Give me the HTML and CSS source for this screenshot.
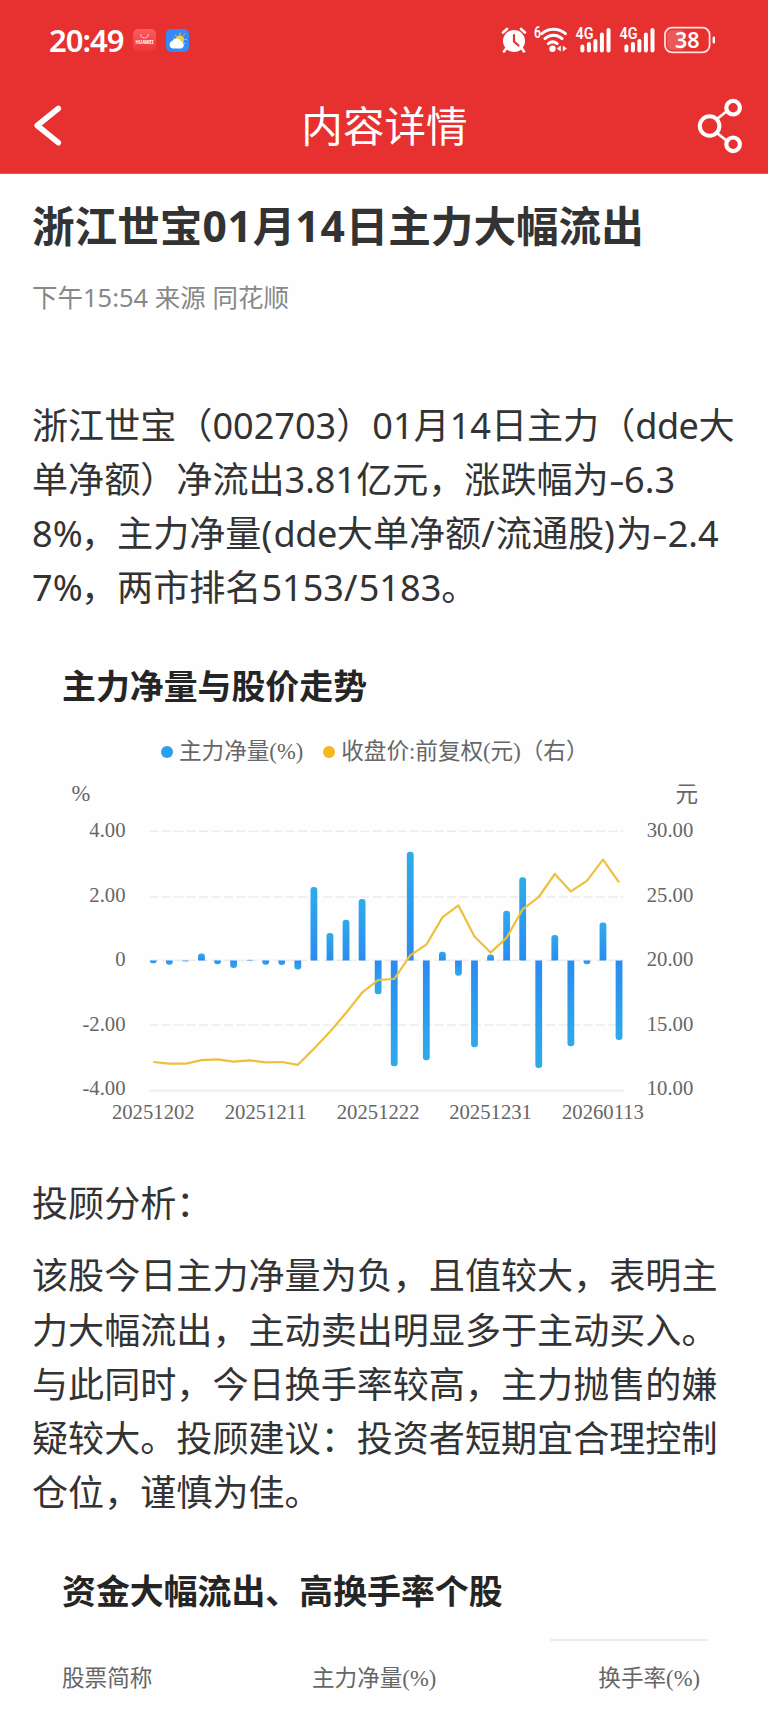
FILE: index.html
```html
<!DOCTYPE html>
<html lang="zh-CN">
<head>
    <meta charset="UTF-8">
    <meta name="viewport" content="width=device-width, initial-scale=1.0">
    <title>内容详情</title>
    <link rel="stylesheet" href="styles.css">
</head>
<body>
    <header class="header">
        <div class="status-bar">
            <span class="time">20:49</span>
            <svg class="app-icon" width="23" height="23" viewBox="0 0 23 23">
                <defs>
                    <linearGradient id="store" x1="0" y1="0" x2="0" y2="1">
                        <stop offset="0" stop-color="#ff5a60"/>
                        <stop offset="1" stop-color="#ea3638"/>
                    </linearGradient>
                </defs>
                <rect width="23" height="23" rx="5" fill="url(#store)"/>
                <path d="M7.5 5a4 4 0 0 0 8 0" fill="none" stroke="#ffc9a8" stroke-width="1"/>
                <text x="11.5" y="15.2" class="store-text" textLength="18" lengthAdjust="spacingAndGlyphs">HUAWEI</text>
            </svg>
            <svg class="app-icon" width="23" height="23" viewBox="0 0 23 23">
                <rect width="23" height="23" rx="5" fill="#338af8"/>
                <g stroke="#f5cf58" stroke-width="1" stroke-linecap="round">
                    <path d="M14 4v1.5M9.3 6.2l1.2 1M18.7 5l-1 1.2M20.3 10.5h-1.3M18.6 14.6l-1-.8M7.8 9.2h1"/>
                </g>
                <circle cx="14" cy="10.5" r="4" fill="#f9cb45"/>
                <path d="M6.8 19.5a4 4 0 0 1-.2-7.8a4.8 4.8 0 0 1 8.6 1.1a3.5 3.5 0 0 1 .3 6.7z" fill="#fff"/>
            </svg>
            <div class="status-right">
                <svg width="26" height="26" viewBox="0 0 26 26">
                    <circle cx="13" cy="14" r="11" fill="#fff"/>
                    <path d="M2 5.5l4-3.5M24 5.5l-4-3.5M5.5 21l-2.5 3.5M20.5 21l2.5 3.5" stroke="#fff" stroke-width="2.6" stroke-linecap="round"/>
                    <path d="M13 8v6.5l4.5 4" fill="none" stroke="#e73130" stroke-width="2.2" stroke-linecap="round"/>
                </svg>
                <svg class="wifi" width="36" height="32" viewBox="0 -2 36 32">
                    <text x="2" y="12" class="net-text" textLength="7" lengthAdjust="spacingAndGlyphs">6</text>
                    <g fill="none" stroke="#fff" stroke-width="3" stroke-linecap="round">
                        <path d="M9.8 7.6a18 18 0 0 1 23.6 0"/>
                        <path d="M12.9 12.6a12.6 12.6 0 0 1 17.2 0"/>
                        <path d="M16.3 17.6a7.2 7.2 0 0 1 8.8 0"/>
                    </g>
                    <circle cx="20.5" cy="22.8" r="3.2" fill="#fff"/>
                    <path d="M24.8 22.5l4-3v6zM34.8 22.5l-4-3v6z" fill="#fff"/>
                </svg>
                <svg class="signal" width="36" height="32" viewBox="0 -2 36 32">
                    <text x="-0.5" y="13" class="net-text" textLength="18" lengthAdjust="spacingAndGlyphs">4G</text>
                    <path d="M6.4 20.5v4M12.9 18v6.5M19.4 15v9.5M25.9 8.5v16M32.5 4v20.5" stroke="#fff" stroke-width="4" stroke-linecap="round"/>
                </svg>
                <svg class="signal" width="36" height="32" viewBox="0 -2 36 32">
                    <text x="-0.5" y="13" class="net-text" textLength="18" lengthAdjust="spacingAndGlyphs">4G</text>
                    <path d="M6.4 20.5v4M12.9 18v6.5M19.4 15v9.5M25.9 8.5v16M32.5 4v20.5" stroke="#fff" stroke-width="4" stroke-linecap="round"/>
                </svg>
                <svg class="battery" width="52" height="36" viewBox="0 -4 52 36">
                    <rect x="1" y="1.7" width="44.6" height="24.6" rx="7" fill="none" stroke="#fff" stroke-opacity=".85" stroke-width="1.8"/>
                    <path d="M8 4h11v20H8a5 5 0 0 1-5-5V9a5 5 0 0 1 5-5z" fill="#fff" fill-opacity=".2"/>
                    <rect x="48.6" y="10.5" width="2.4" height="7" rx="1.2" fill="#fff"/>
                    <text x="23.2" y="21.6" class="battery-text">38</text>
                </svg>
            </div>
        </div>
        <div class="nav">
            <svg width="32" height="44" viewBox="0 0 32 44">
                <path d="M26.3 4.5L5.2 21.5L26.3 38.7" fill="none" stroke="#fff" stroke-width="5.6" stroke-linecap="round" stroke-linejoin="round"/>
            </svg>
            <h1 class="nav-title">内容详情</h1>
            <svg width="46" height="56" viewBox="0 0 46 56">
                <g fill="none" stroke="#fff">
                    <path d="M20 21l10-8M20 35l10 8" stroke-width="2.8"/>
                    <circle cx="12.6" cy="28" r="9.8" stroke-width="4"/>
                    <circle cx="36.1" cy="9.7" r="6.8" stroke-width="4.2"/>
                    <circle cx="36.1" cy="46.3" r="6.8" stroke-width="4.2"/>
                </g>
            </svg>
        </div>
    </header>

    <main class="article">
        <h2 class="title">浙江世宝<span class="num">01</span>月<span class="num">14</span>日主力大幅流出</h2>
        <p class="meta">下午15:54 来源 同花顺</p>

        <p class="text">浙江世宝（002703）01月14日主力（<span class="latin">dde</span>大<br>单净额）净流出3.81亿元，涨跌幅为<span class="minus">-</span>6.3<br>8<span class="percent">%</span>，主力净量<span class="sign">(</span><span class="latin">dde</span>大单净额<span class="sign">/</span>流通股<span class="sign">)</span>为<span class="minus">-</span>2.4<br>7<span class="percent">%</span>，两市排名5153<span class="sign">/</span>5183。</p>

        <section class="chart">
            <h3 class="section-title">主力净量与股价走势</h3>
            <div class="legend">
                <span class="dot dot-blue"></span><span>主力净量(%)</span>
                <span class="dot dot-yellow"></span><span>收盘价:前复权(元)（右）</span>
            </div>
            <svg class="plot" id="plot" width="768" height="360" viewBox="0 0 768 360">
                <defs>
                    <linearGradient id="up" x1="0" y1="0" x2="0" y2="1">
                        <stop offset="0" stop-color="#2eabea"/>
                        <stop offset="1" stop-color="#2b8bf1"/>
                    </linearGradient>
                    <linearGradient id="down" x1="0" y1="0" x2="0" y2="1">
                        <stop offset="0" stop-color="#2b8bf1"/>
                        <stop offset="1" stop-color="#2eabea"/>
                    </linearGradient>
                </defs>
                <text x="71.5" y="32.2" class="unit">%</text>
                <text x="675.5" y="33" class="unit">元</text>
            </svg>
        </section>

        <p class="text text-label">投顾分析：</p>
        <p class="text text-analysis">该股今日主力净量为负，且值较大，表明主<br>力大幅流出，主动卖出明显多于主动买入。<br>与此同时，今日换手率较高，主力抛售的嫌<br>疑较大。投顾建议：投资者短期宜合理控制<br>仓位，谨慎为佳。</p>

        <section class="stocks">
            <h3 class="section-title">资金大幅流出、高换手率个股</h3>
            <div class="table-head">
                <span>股票简称</span>
                <span>主力净量(%)</span>
                <span class="last">换手率(%)</span>
            </div>
        </section>
    </main>
    <script src="chart.js"></script>
</body>
</html>
```
FILE: styles.css
```css
* {
    box-sizing: border-box;
}
body {
    margin: 0;
    width: 768px;
    height: 1709px;
    overflow: hidden;
    background: #fefefe;
    color: #333;
    font-family: "Noto Sans", "Noto Sans CJK SC", sans-serif;
}
h1, h2, h3, p {
    margin: 0;
}
svg {
    display: block;
    flex: none;
    overflow: visible;
}

/* header */
.header {
    height: 174px;
    background: #e73130;
    border-bottom: 1px solid #b0706a;
    color: #fff;
}
.status-bar {
    display: flex;
    align-items: center;
    height: 80px;
    padding-left: 49px;
    padding-right: 52px;
}
.time {
    width: 84px;
    font-size: 31px;
    font-weight: 600;
    letter-spacing: -1px;
    line-height: 40px;
    white-space: nowrap;
}
.app-icon {
    margin-right: 10px;
}
.status-right {
    display: flex;
    align-items: center;
    margin-left: auto;
}
.wifi {
    margin-left: 5px;
}
.signal {
    margin-left: 8px;
}
.battery {
    margin-left: 8px;
}
.store-text {
    fill: #fff;
    font-size: 5px;
    font-weight: 700;
    text-anchor: middle;
}
.net-text {
    fill: #fff;
    font-family: Roboto, sans-serif;
    font-size: 16px;
    font-weight: 600;
}
.battery-text {
    fill: #fff;
    font-size: 21.5px;
    font-weight: 600;
    text-anchor: middle;
}
.nav {
    display: flex;
    align-items: center;
    justify-content: space-between;
    height: 92px;
    padding: 0 25px 0 32px;
}
.nav-title {
    padding-left: 8px;
    font-size: 41.6px;
    font-weight: 400;
    line-height: 60px;
}

/* article */
.article {
    padding-top: 20px;
}
.title {
    padding-left: 32px;
    font-size: 42.6px;
    font-weight: 700;
    line-height: 62px;
    white-space: nowrap;
}
.title .num {
    letter-spacing: 0.8px;
}
.meta {
    margin-top: 22px;
    padding-left: 32px;
    color: #888;
    font-size: 25.5px;
    line-height: 38px;
}
.text {
    padding-left: 32px;
    font-size: 36.1px;
    line-height: 54.1px;
    white-space: nowrap;
}
.text .latin {
    letter-spacing: -0.5px;
}
.text .percent {
    letter-spacing: -1.6px;
}
.text .sign {
    letter-spacing: 1.3px;
}
.text .minus {
    display: inline-block;
    width: 15.4px;
    transform: scaleX(1.35);
    transform-origin: left;
}
.meta + .text {
    margin-top: 82px;
}
.text-label {
    margin-top: 47px;
}
.text-analysis {
    margin-top: 18px;
}
.section-title {
    padding-left: 62px;
    color: #252525;
    font-size: 33.9px;
    font-weight: 700;
    line-height: 50px;
    white-space: nowrap;
}

/* chart */
.chart {
    margin-top: 49px;
    color: #666;
    font-family: "Liberation Serif", "Noto Sans CJK SC", serif;
}
.legend {
    display: flex;
    align-items: center;
    height: 34px;
    margin-top: 22px;
    padding-left: 161px;
    font-size: 22.6px;
    line-height: 34px;
    white-space: nowrap;
}
.dot {
    width: 12px;
    height: 12px;
    margin-right: 6px;
    border-radius: 50%;
}
.dot-blue {
    background: #2c9fee;
}
.dot-yellow {
    margin-left: 20px;
    background: #f7b61a;
}
.plot text {
    fill: #666;
    font-size: 20.7px;
}
.plot .unit {
    font-size: 22.6px;
}
.plot .left {
    text-anchor: end;
}
.plot .date {
    text-anchor: middle;
}
.plot .grid {
    stroke: #ececec;
    stroke-width: 1.6;
    stroke-dasharray: 9 3.4;
}
.plot .axis {
    stroke: #ececec;
    stroke-width: 1.8;
}
.plot .price {
    fill: none;
    stroke: #eec03a;
    stroke-width: 2.2;
    stroke-linejoin: round;
}

/* table */
.stocks {
    margin-top: 49px;
    font-family: "Liberation Serif", "Noto Sans CJK SC", serif;
}
.table-head {
    display: grid;
    grid-template-columns: 250px 238px 158px;
    margin-top: 21px;
    padding-left: 62px;
    color: #666;
    font-size: 22.6px;
    line-height: 34px;
}
.table-head span {
    padding-top: 21px;
    border-top: 2px solid transparent;
}
.table-head .last {
    padding-right: 8px;
    border-top-color: #ececec;
    text-align: right;
}
```
FILE: chart.js
```js
const flow = [-0.09, -0.13, -0.03, 0.21, -0.12, -0.23, 0.02, -0.13, -0.14, -0.28,
    2.26, 0.84, 1.25, 1.89, -1.04, -3.26, 3.34, -3.07, 0.27, -0.47,
    -2.67, 0.18, 1.53, 2.56, -3.31, 0.78, -2.64, -0.12, 1.17, -2.45];
const price = [12.21, 12.08, 12.08, 12.36, 12.42, 12.24, 12.34, 12.18, 12.21, 12.0,
    13.24, 14.55, 15.99, 17.55, 18.53, 18.61, 20.43, 21.25, 23.36, 24.28,
    21.89, 20.64, 21.79, 23.98, 24.93, 26.70, 25.36, 26.18, 27.80, 26.06];
const dates = ["20251202", "20251211", "20251222", "20251231", "20260113"];

const plot = document.getElementById("plot");
const left = 153.3;
const step = 16.06;
const top4 = 62.2;
const bottom = 321.7;
const zero = 191.4;
const barWidth = 6.8;

function add(tag, attrs, text) {
    const el = document.createElementNS("http://www.w3.org/2000/svg", tag);
    for (const key in attrs) {
        el.setAttribute(key, attrs[key]);
    }
    if (text) {
        el.textContent = text;
    }
    plot.appendChild(el);
}

// grid and axis labels
const leftLabels = ["4.00", "2.00", "0", "-2.00", "-4.00"];
const rightLabels = ["30.00", "25.00", "20.00", "15.00", "10.00"];
const rows = [top4, 128, zero, 256, bottom];
rows.forEach((y, i) => {
    add("line", { x1: 149.5, x2: 623.5, y1: y, y2: y, class: i === 4 ? "axis" : "grid" });
    const base = 68 + i * 64.6;
    add("text", { x: 125.5, y: base, class: "left" }, leftLabels[i]);
    add("text", { x: 646.7, y: base }, rightLabels[i]);
});
dates.forEach((date, i) => {
    add("text", { x: left + i * 7 * step, y: 350.4, class: "date" }, date);
});

// bars, rounded at the far end only
flow.forEach((value, i) => {
    const x = left + i * step - barWidth / 2;
    const h = Math.abs(value) * 32.5;
    const r = Math.min(3, h);
    const dir = value > 0 ? -1 : 1;
    const sweep = value > 0 ? 1 : 0;
    const end = zero + dir * h;
    const d = `M${x} ${zero}V${end - dir * r}A3 ${r} 0 0 ${sweep} ${x + 3} ${end}H${x + barWidth - 3}A3 ${r} 0 0 ${sweep} ${x + barWidth} ${end - dir * r}V${zero}z`;
    add("path", { d: d, fill: value > 0 ? "url(#up)" : "url(#down)" });
});

const points = price.map((p, i) => {
    const y = top4 + (30 - p) / 20 * (bottom - top4);
    return `${left + i * step},${y.toFixed(1)}`;
});
add("polyline", { points: points.join(" "), class: "price" });
```
